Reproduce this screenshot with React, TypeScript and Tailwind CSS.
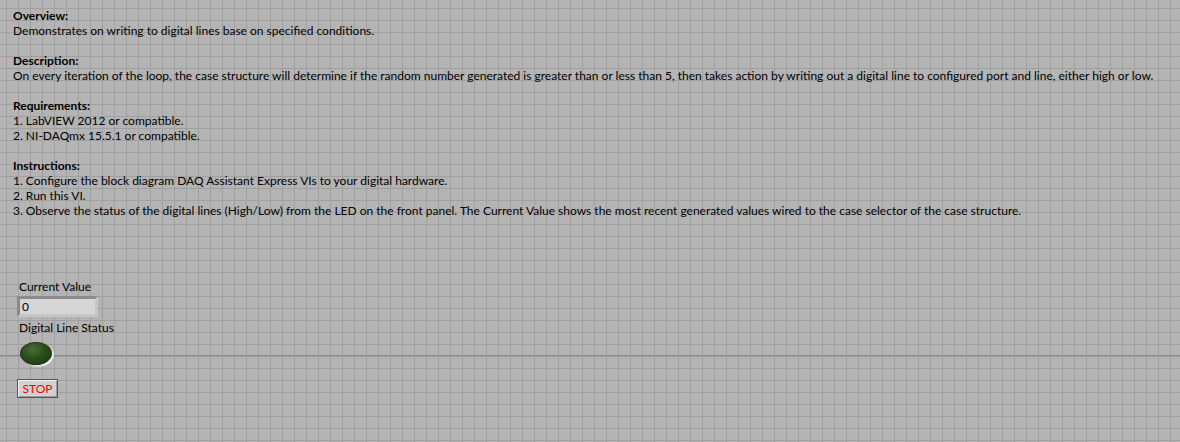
import React from "react";

const Line = ({ children, bold }: { children?: React.ReactNode; bold?: boolean }) => (
  <div className={`h-[15px] leading-[15px] whitespace-nowrap ${bold ? "font-bold" : ""}`}>{children}</div>
);

export default function App() {
  return (
    <div
      className="relative w-[1180px] h-[442px] overflow-hidden bg-[#b4b4b4] text-black bg-[image:linear-gradient(to_bottom,transparent_355px,#8a8a8a_355px,#8a8a8a_356px,transparent_356px),linear-gradient(to_right,#a0a0a0_1px,transparent_1px),linear-gradient(to_bottom,#a0a0a0_1px,transparent_1px)] bg-[size:100%_100%,12px_12px,12px_12px] bg-[position:0_0,6px_8px,6px_8px] font-[Lato,'Liberation_Sans',sans-serif] text-[12px]"
    >
      <div className="pl-[13px] pt-[8px]">
        <Line bold>Overview:</Line>
        <Line>Demonstrates on writing to digital lines base on specified conditions.</Line>
        <Line />
        <Line bold>Description:</Line>
        <Line>
          On every iteration of the loop, the case structure will determine if the random number generated is greater than or less than 5, then takes action by writing out a digital line to configured port and line, either high or low.
        </Line>
        <Line />
        <Line bold>Requirements:</Line>
        <Line>1. LabVIEW 2012 or compatible.</Line>
        <Line>2. NI-DAQmx 15.5.1 or compatible.</Line>
        <Line />
        <Line bold>Instructions:</Line>
        <Line>1. Configure the block diagram DAQ Assistant Express VIs to your digital hardware.</Line>
        <Line>2. Run this VI.</Line>
        <Line>
          3. Observe the status of the digital lines (High/Low) from the LED on the front panel. The Current Value shows the most recent generated values wired to the case selector of the case structure.
        </Line>
      </div>
      <div className="pl-[17px] pt-[62px] flex flex-col items-start">
        <div className="pl-[2px] h-[14px] leading-[14px]">Current Value</div>
        <div className="mt-[2px] w-[81px] h-[21px] border-[3px] border-t-[#8a8a8a] border-l-[#8a8a8a] border-r-[#c6c6c6] border-b-[#c6c6c6] bg-[#d6d6d6] pl-[2px] leading-[15px]">0</div>
        <div className="mt-[4px] pl-[2px] h-[14px] leading-[14px]">Digital Line Status</div>
        <div className="mt-[6px] ml-[2px] w-[35px] h-[26px] rounded-[50%] bg-[linear-gradient(135deg,transparent_50%,#ffffff_88%)] p-[1px]">
          <div className="w-[32px] h-[23px] rounded-[50%] bg-[radial-gradient(ellipse_at_40%_30%,#4a6e38_0%,#2a4d1a_45%,#1a340f_100%)] border border-[#22361a]" />
        </div>
        <div className="mt-[12px] w-[41px] h-[19px] border border-[#555] bg-[#d2d2d2] shadow-[inset_1px_1px_0_#f0f0f0,inset_-1px_-1px_0_#9a9a9a] text-[#ff0000] text-[12px] leading-[17px] text-center">STOP</div>
      </div>
    </div>
  );
}
